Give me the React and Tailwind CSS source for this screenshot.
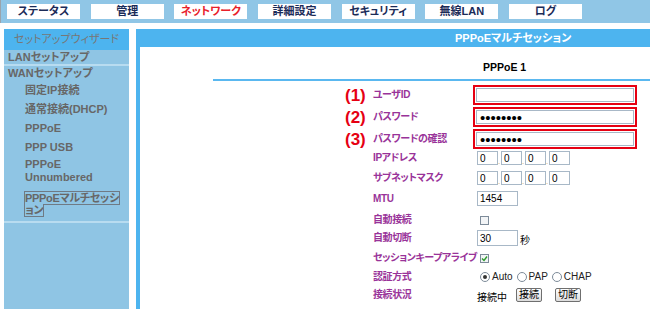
const font = "font-['Liberation_Sans','Noto_Sans_CJK_JP',sans-serif] [font-feature-settings:'palt']";

const tabs = [
  { label: 'ステータス' },
  { label: '管理' },
  { label: 'ネットワーク', active: true },
  { label: '詳細設定' },
  { label: 'セキュリティ' },
  { label: '無線LAN' },
  { label: 'ログ' },
];

const Sidebar = () => (
  <div className="ml-[4px] w-[125px] h-full bg-[#8fc5e4] flex flex-col text-[#676767] font-bold text-[11px]">
    <div className="h-[21px] bg-[#4db4ef] flex items-center justify-center font-normal text-[#777]">セットアップウィザード</div>
    <div className="h-[14px] pl-[4px] flex items-center">LANセットアップ</div>
    <div className="h-[2px] bg-[#b8dcf0]" />
    <div className="h-[15px] pl-[4px] flex items-center">WANセットアップ</div>
    <div className="pl-[21px]">
      <div className="h-[19px] flex items-center">固定IP接続</div>
      <div className="h-[19px] flex items-center">通常接続(DHCP)</div>
      <div className="h-[19px] flex items-center">PPPoE</div>
      <div className="h-[19px] flex items-center">PPP USB</div>
      <div className="leading-[13px] pt-[1px]">PPPoE<br />Unnumbered</div>
      <div className="leading-[12px] mt-[8px] tracking-[-0.3px]">
        <span className="outline outline-1 outline-[#6f7a84]">PPPoEマルチセッシ<br />ョン</span>
      </div>
    </div>
    <div className="h-[2px] bg-[#b8dcf0] mt-[5px]" />
  </div>
);

const Row = ({ num, label, className, children }) => (
  <div className={`flex items-center ${className}`}>
    <div className="w-[28px] text-[#e60012] font-bold text-[17px] leading-none font-['Liberation_Sans',sans-serif]">{num}</div>
    <div className="w-[100px] text-[#993399] font-bold text-[10px] leading-none whitespace-nowrap tracking-[-0.4px]">{label}</div>
    {children}
  </div>
);

const RedBox = ({ children }) => (
  <div className="w-[164px] h-full border-2 border-[#e60012] p-[1px]">
    <div className="h-full border border-[#a8b8c7] bg-white flex items-center pl-[3px] text-[15px] leading-none text-black">{children}</div>
  </div>
);

const Field = ({ className, children }) => (
  <div className={`h-full border border-[#a8b8c7] bg-white flex items-center pl-[2px] text-[10px] text-black ${className}`}>{children}</div>
);

const Octets = () => (
  <div className="pl-[4px] h-full flex items-end">
    {[0, 1, 2, 3].map((i) => (
      <div key={i} className="flex items-end h-full">
        {i > 0 && <span className="w-[3px] text-[8px] leading-[6px] text-[#c8a062]">.</span>}
        <Field className="w-[21px]">0</Field>
      </div>
    ))}
  </div>
);

const Check = ({ checked }) => (
  <div className="ml-[7px] w-[9px] h-[9px] border border-[#7d8b99] bg-[#f2f4f6] flex items-center justify-center">
    {checked && (
      <svg width="7" height="7" viewBox="0 0 7 7">
        <path d="M1 3.5 L3 5.5 L6 1.5" stroke="#2b9a2b" strokeWidth="1.4" fill="none" />
      </svg>
    )}
  </div>
);

const Radio = ({ on, label }) => (
  <div className="flex items-center gap-[2px] mr-[4px]">
    <div className="w-[10px] h-[10px] rounded-full border border-[#7d8b99] bg-white flex items-center justify-center">
      {on && <div className="w-[4px] h-[4px] rounded-full bg-[#333]" />}
    </div>
    <span className="text-[10px] leading-none text-[#222]">{label}</span>
  </div>
);

const Btn = ({ children }) => (
  <div className="h-[14px] px-[2px] border border-[#6f6f6f] rounded-[2px] bg-gradient-to-b from-white to-[#dcdcdc] flex items-center text-[10px] leading-none text-black">{children}</div>
);

const Main = () => (
  <div className="ml-[7px] flex-1 flex flex-col">
    <div className="h-[18px] bg-[#4db4ef] text-white font-bold text-[11px] pl-[319px] flex items-center">PPPoEマルチセッション</div>
    <div className="flex-1 border-l-4 border-[#4db4ef] bg-white">
      <div className="pt-[14px] pl-[343px] text-[10.5px] leading-[12px] font-bold text-black">PPPoE 1</div>
      <div className="mt-[6px] ml-[73px] h-[2px] bg-[#5ab8f0]" />
      <div className="ml-[205px]">
        <Row num="(1)" label="ユーザID" className="mt-[4px] h-[20px]">
          <RedBox />
        </Row>
        <Row num="(2)" label="パスワード" className="mt-[2px] h-[20px]">
          <RedBox>••••••••</RedBox>
        </Row>
        <Row num="(3)" label="パスワードの確認" className="mt-[2px] h-[20px]">
          <RedBox>••••••••</RedBox>
        </Row>
        <Row label="IPアドレス" className="mt-[2px] h-[14px]">
          <Octets />
        </Row>
        <Row label="サブネットマスク" className="mt-[6px] h-[14px]">
          <Octets />
        </Row>
        <Row label="MTU" className="mt-[6px] h-[15px]">
          <div className="pl-[4px] h-full"><Field className="w-[41px]">1454</Field></div>
        </Row>
        <Row label="自動接続" className="mt-[9px] h-[10px]">
          <Check />
        </Row>
        <Row label="自動切断" className="mt-[5px] h-[16px]">
          <div className="pl-[4px] h-full flex items-end">
            <Field className="w-[41px]">30</Field>
            <span className="ml-[2px] text-[10px] leading-none text-black">秒</span>
          </div>
        </Row>
        <Row label="セッションキープアライブ" className="mt-[7px] h-[10px]">
          <Check checked />
        </Row>
        <Row label="認証方式" className="mt-[9px] h-[10px]">
          <div className="pl-[7px] flex items-center">
            <Radio on label="Auto" />
            <Radio label="PAP" />
            <Radio label="CHAP" />
          </div>
        </Row>
        <Row label="接続状況" className="mt-[6px] h-[14px]">
          <div className="pl-[4px] flex items-center">
            <span className="text-[10px] text-black mt-[4px] w-[39px]">接続中</span>
            <Btn>接続</Btn>
            <div className="w-[13px]" />
            <Btn>切断</Btn>
          </div>
        </Row>
      </div>
    </div>
  </div>
);

export default function App() {
  return (
    <div className={`w-[650px] h-[309px] overflow-hidden bg-white ${font}`}>
      <div className="h-[23px] bg-[#90c6e6] border-l border-[#9aa4ac] flex gap-[10.67px] pl-[6px] pt-[4px]">
        {tabs.map((t) => (
          <div
            key={t.label}
            className={`w-[73px] h-[15px] bg-white flex items-center justify-center text-[11px] font-bold ${t.active ? 'text-[#e8202a]' : 'text-[#1b2b58]'}`}
          >
            {t.label}
          </div>
        ))}
      </div>
      <div className="flex pt-[6px] h-[286px]">
        <Sidebar />
        <Main />
      </div>
    </div>
  );
}
